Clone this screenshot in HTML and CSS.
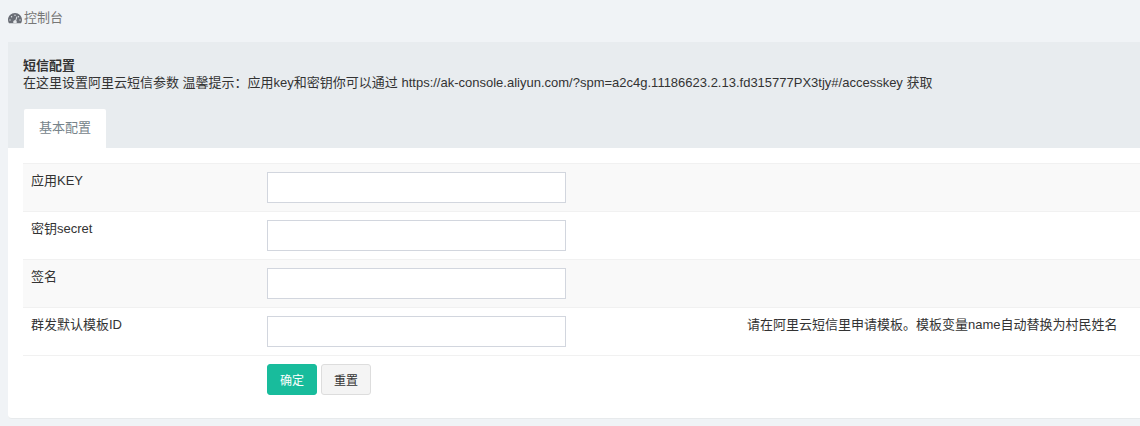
FILE: index.html
```html
<!DOCTYPE html>
<html lang="zh-CN">

<head>
    <meta charset="UTF-8">
    <title>短信配置</title>
    <link rel="stylesheet" href="styles.css">
</head>

<body>
    <div class="crumb">
        <svg class="crumb-icon" viewBox="0 0 14 12" width="14" height="12">
            <path fill="#6a6e76" d="M7 1C3.1 1 0 4 0 7.8c0 1.1.3 2.2.8 3.1.1.2.3.3.6.3h11.2c.3 0 .5-.1.6-.3.5-.9.8-2 .8-3.1C14 4 10.9 1 7 1z"/>
            <g fill="#e4e7ea">
                <circle cx="7" cy="3.2" r=".7"/>
                <circle cx="3.6" cy="4.7" r=".7"/>
                <circle cx="10.4" cy="4.7" r=".7"/>
                <circle cx="2" cy="8" r=".7"/>
                <circle cx="12" cy="8" r=".7"/>
                <path d="M8.5 4.4l.9.3-1.2 4.1c.4.3.6.7.6 1.1 0 .4-.1.7-.3 1H5.5c-.2-.3-.3-.6-.3-1 0-1 .8-1.7 1.8-1.7h.3z"/>
            </g>
        </svg>
        <span>控制台</span>
    </div>

    <div class="panel">
        <div class="panel-head">
            <h5>短信配置</h5>
            <p>在这里设置阿里云短信参数 温馨提示：应用key和密钥你可以通过 https://ak-console.aliyun.com/?spm=a2c4g.11186623.2.13.fd315777PX3tjy#/accesskey 获取</p>
            <div class="tabs">
                <a class="tab">基本配置</a>
            </div>
        </div>

        <div class="panel-body">
            <div class="row striped">
                <label>应用KEY</label>
                <input type="text">
            </div>
            <div class="row">
                <label>密钥secret</label>
                <input type="text">
            </div>
            <div class="row striped">
                <label>签名</label>
                <input type="text">
            </div>
            <div class="row">
                <label>群发默认模板ID</label>
                <input type="text">
                <span class="help">请在阿里云短信里申请模板。模板变量name自动替换为村民姓名</span>
            </div>
            <div class="actions">
                <button class="btn btn-primary">确定</button>
                <button class="btn btn-default">重置</button>
            </div>
        </div>
    </div>
</body>

</html>
```

FILE: styles.css
```css
* {
    box-sizing: border-box;
}

html, body {
    overflow: hidden;
}

body {
    margin: 0;
    height: 426px;
    background-color: #f0f3f6;
    font-family: "Liberation Sans", "Noto Sans CJK SC", sans-serif;
    font-size: 13px;
    color: #333;
}

.crumb {
    height: 42px;
    padding: 10px 0 0 8px;
    display: flex;
    align-items: flex-start;
    gap: 2px;
    color: #777;
    line-height: 15px;
}

.crumb-icon {
    margin-top: 2px;
}

.panel {
    margin-left: 8px;
    height: 377px;
    background-color: #fff;
    border-radius: 4px 0 0 4px;
    border-bottom: 1px solid #e7eaec;
}

.panel-head {
    height: 106px;
    padding: 15px 0 0 15px;
    background-color: #e8ecef;
}

.panel-head h5 {
    margin: 0;
    font-size: 13px;
    line-height: 17px;
    font-weight: bold;
    color: #333;
}

.panel-head p {
    margin: 0;
    line-height: 17px;
}

.tabs {
    margin: 18px 0 0 1px;
    display: flex;
}

.tab {
    width: 82px;
    height: 39px;
    line-height: 38px;
    text-align: center;
    background-color: #fff;
    border-radius: 2px 2px 0 0;
    color: #76838a;
}

.panel-body {
    padding: 15px 0 0 15px;
}

.row {
    height: 48px;
    padding-top: 8px;
    display: grid;
    grid-template-columns: 244px 299px 181px auto;
    border-top: 1px solid #f1f1f1;
}

.row.striped {
    background-color: #f9f9f9;
}

.row label {
    padding: 0 0 0 8px;
    line-height: 17px;
}

.row input {
    height: 31px;
    border: 1px solid #d2d6de;
    background-color: #fff;
    border-radius: 0;
    padding: 0 8px;
}

.help {
    grid-column: 4;
    line-height: 17px;
}

.actions {
    padding: 8px 0 0 244px;
    display: flex;
    gap: 4px;
    border-top: 1px solid #f1f1f1;
}

.btn {
    width: 50px;
    height: 31px;
    border-radius: 3px;
    font-family: inherit;
    font-size: 12px;
    padding: 0;
}

.btn-primary {
    background-color: #18bc9c;
    border: 1px solid #18bc9c;
    color: #fff;
}

.btn-default {
    background-color: #f4f4f4;
    border: 1px solid #ddd;
    color: #333;
}
```
